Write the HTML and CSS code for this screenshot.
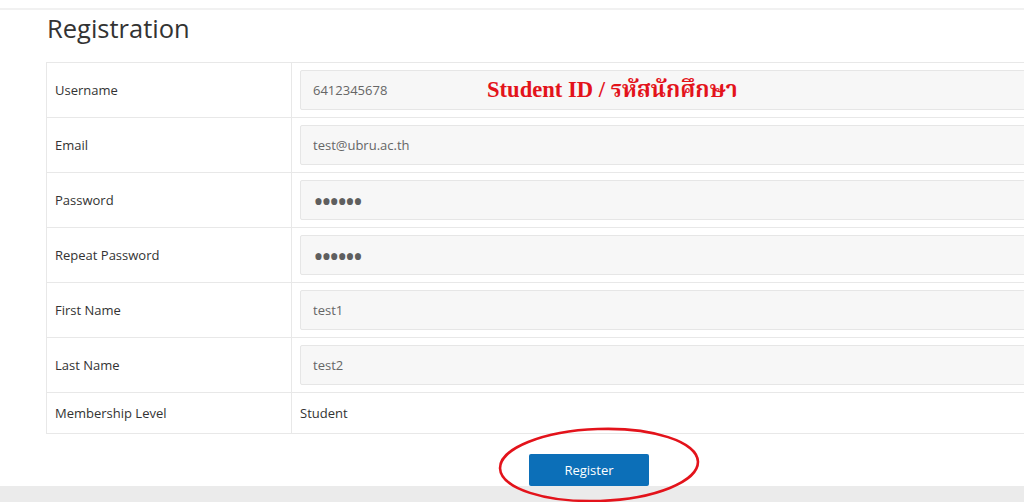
FILE: index.html
```html
<!DOCTYPE html>
<html lang="en">
<head>
    <meta charset="UTF-8">
    <meta name="viewport" content="width=device-width, initial-scale=1.0">
    <title>Registration</title>
    <link rel="stylesheet" href="styles.css">
</head>
<body>
    <div class="topbar"></div>
    <div class="page">
        <h2>Registration</h2>
        <table class="reg-table">
            <tr>
                <td class="label">Username</td>
                <td class="field note-cell">
                    <input type="text" class="form-control" value="6412345678" readonly>
                    <span class="note">Student ID / รหัสนักศึกษา</span>
                </td>
            </tr>
            <tr>
                <td class="label">Email</td>
                <td class="field"><input type="text" class="form-control" value="test@ubru.ac.th" readonly></td>
            </tr>
            <tr>
                <td class="label">Password</td>
                <td class="field"><input type="password" class="form-control pass" value="123456" readonly></td>
            </tr>
            <tr>
                <td class="label">Repeat Password</td>
                <td class="field"><input type="password" class="form-control pass" value="123456" readonly></td>
            </tr>
            <tr>
                <td class="label">First Name</td>
                <td class="field"><input type="text" class="form-control" value="test1" readonly></td>
            </tr>
            <tr>
                <td class="label">Last Name</td>
                <td class="field"><input type="text" class="form-control" value="test2" readonly></td>
            </tr>
            <tr class="plain-row">
                <td class="label">Membership Level</td>
                <td class="value">Student</td>
            </tr>
        </table>
        <div class="actions">
            <button type="button" class="btn">Register</button>
            <!-- red circle drawn over the button -->
            <svg class="circle" width="210" height="80" viewBox="0 0 210 80">
                <ellipse cx="104" cy="39" rx="99" ry="36" fill="none" stroke="#e3131b" stroke-width="2.6" transform="rotate(-2 104 39)"/>
            </svg>
        </div>
    </div>
    <div class="footer"></div>
</body>
</html>
```

FILE: styles.css
```css
body {
    margin: 0;
    overflow: hidden;
    font-family: "Open Sans", "Noto Sans", sans-serif;
    color: #333;
    background-color: #fff;
}

.topbar {
    height: 8px;
    border-bottom: 2px solid #f1f1f1;
}

.page {
    margin-left: 46px;
    width: 1086px;
}

.page h2 {
    margin: 0 0 16px 1px;
    font-size: 25.5px;
    font-weight: 400;
    line-height: 36px;
    color: #333;
}

.reg-table {
    width: 100%;
    border-collapse: collapse;
    border: 1px solid #e8e8e8;
    font-size: 13px;
}

.reg-table td {
    border: 1px solid #e8e8e8;
    padding: 7px 8px;
    vertical-align: middle;
}

.reg-table .label {
    width: 228px;
}

.note-cell {
    position: relative;
}

.note {
    position: absolute;
    left: 195px;
    top: 15px;
    font-family: "Liberation Serif", "Noto Serif Thai", "Noto Sans Thai", serif;
    font-weight: bold;
    font-size: 22.6px;
    line-height: 24px;
    color: #e3131b;
    white-space: nowrap;
}

.form-control {
    display: block;
    box-sizing: border-box;
    width: 100%;
    height: 40px;
    padding: 0 12px;
    background-color: #f7f7f7;
    border: 1px solid #e6e6e6;
    border-radius: 2px;
    font-family: "Open Sans", "Noto Sans", sans-serif;
    font-size: 13px;
    color: #666;
    outline: none;
}

.form-control.pass {
    font-size: 29px;
    letter-spacing: -3px;
    color: #5f5f5f;
}

.plain-row td {
    height: 40px;
    padding-top: 0;
    padding-bottom: 0;
}

.actions {
    position: relative;
    margin-top: 20px;
    text-align: center;
    height: 32px;
}

.btn {
    width: 120px;
    height: 32px;
    border: none;
    border-radius: 2px;
    background-color: #0c6fb8;
    color: #fff;
    font-family: "Open Sans", "Noto Sans", sans-serif;
    font-size: 13px;
    cursor: pointer;
}

.circle {
    position: absolute;
    left: 449px;
    top: -28px;
    z-index: 2;
}

.footer {
    height: 20px;
    background-color: #ebebeb;
}
```
